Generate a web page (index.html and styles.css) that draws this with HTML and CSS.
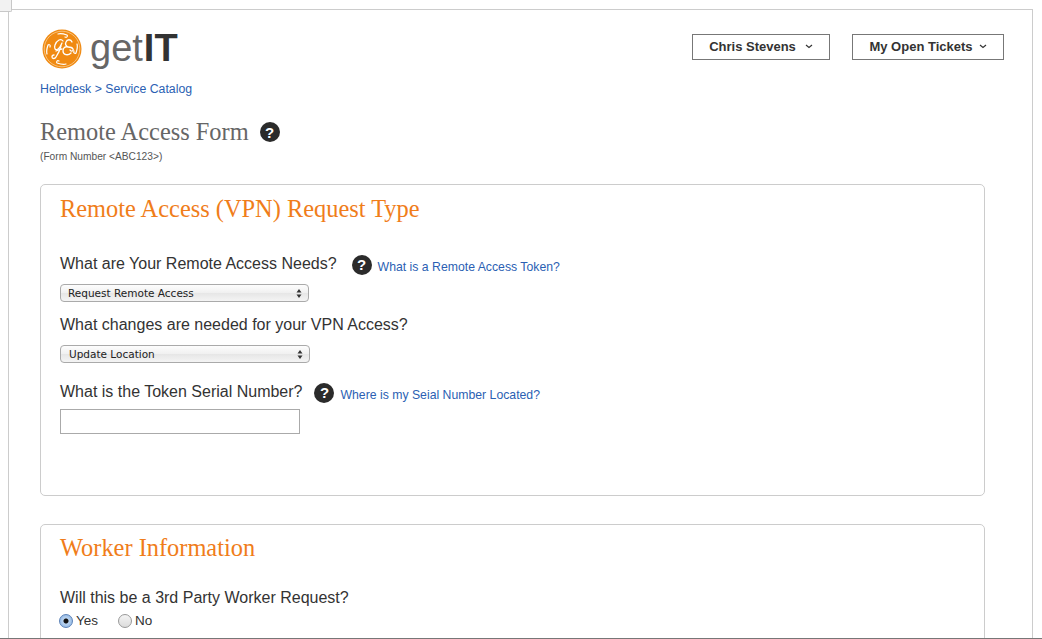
FILE: index.html
```html
<!DOCTYPE html>
<html lang="en">
<head>
    <meta charset="UTF-8">
    <meta name="viewport" content="width=device-width, initial-scale=1.0">
    <title>Remote Access Form</title>
    <link rel="stylesheet" href="styles.css">
</head>
<body>

    <div class="corner-tab"></div>

    <div class="page">
        <header class="top-bar">
            <div class="brand">
                <svg class="ge-logo" width="40" height="40" viewBox="0 0 40 40">
                    <circle cx="20" cy="20" r="19.500" fill="#f08a12"/>
                    <circle cx="20" cy="20" r="17.800" fill="none" stroke="#fbd9a8" stroke-width="0.700"/>
                    <g fill="none" stroke="#fff" stroke-width="1.300" stroke-linecap="round">
                        <path d="M21 12c-2-3-6-1-8 4-1 3 0 6 3 4 2-1 3-4 4-6"/>
                        <path d="M19 17c-1 4-3 8-5 11-1 2-4 2-4 0 0-1 1-2 2-2"/>
                        <path d="M14 22c2-1 4-2 6-2"/>
                        <path d="M30 13c-1-3-5-3-6 0-1 2 0 4 2 5-3-1-5 1-5 4 0 4 5 5 8 2"/>
                        <path d="M26 18c2 0 4 0 5 2 1 2-2 3-3 1"/>
                    </g>
                    <g fill="none" stroke="#fff" stroke-width="1.200" stroke-linecap="round">
                        <path d="M16 5c3-1 6 0 9 1 1 1 0 3-2 2"/>
                        <path d="M35 15c1 3 0 6-1 9-1 1-3 0-2-2"/>
                        <path d="M24 35c-3 1-6 0-9-1-1-1 0-3 2-2"/>
                        <path d="M5 25c-1-3 0-6 1-9 1-1 3 0 2 2"/>
                    </g>
                </svg>
                <span class="brand-name">get<strong>IT</strong></span>
            </div>
            <div class="top-actions">
                <button class="menu-btn menu-user">Chris Stevens
                    <svg width="8" height="5" viewBox="0 0 8 5"><path d="M1 1l3 2.500 3-2.500" fill="none" stroke="#333" stroke-width="1.200"/></svg>
                </button>
                <button class="menu-btn menu-tickets">My Open Tickets
                    <svg width="8" height="5" viewBox="0 0 8 5"><path d="M1 1l3 2.500 3-2.500" fill="none" stroke="#333" stroke-width="1.200"/></svg>
                </button>
            </div>
        </header>

        <p class="breadcrumb"><a href="#">Helpdesk</a> &gt; <a href="#">Service Catalog</a></p>

        <div class="form-title">
            <h1>Remote Access Form</h1>
            <span class="help-icon">?</span>
        </div>
        <p class="form-number">(Form Number &lt;ABC123&gt;)</p>

        <section class="card card-request">
            <h2>Remote Access (VPN) Request Type</h2>

            <div class="field-row row-needs">
                <label>What are Your Remote Access Needs?</label>
                <span class="help-icon">?</span>
                <a href="#">What is a Remote Access Token?</a>
            </div>
            <div class="select-box box-needs">
                <select><option>Request Remote Access</option></select>
                <svg class="select-arrows" width="6" height="9" viewBox="0 0 6 9"><path d="M3 0l2.500 3.500h-5zM3 9l2.500-3.500h-5z" fill="#333"/></svg>
            </div>

            <div class="field-row row-changes">
                <label>What changes are needed for your VPN Access?</label>
            </div>
            <div class="select-box box-changes">
                <select><option>Update Location</option></select>
                <svg class="select-arrows" width="6" height="9" viewBox="0 0 6 9"><path d="M3 0l2.500 3.500h-5zM3 9l2.500-3.500h-5z" fill="#333"/></svg>
            </div>

            <div class="field-row row-serial">
                <label>What is the Token Serial Number?</label>
                <span class="help-icon">?</span>
                <a href="#">Where is my Seial Number Located?</a>
            </div>
            <input class="serial-input" type="text">
        </section>

        <section class="card card-worker">
            <h2>Worker Information</h2>
            <div class="field-row row-third">
                <label>Will this be a 3rd Party Worker Request?</label>
            </div>
            <div class="radio-row">
                <span class="radio radio-on"></span><span class="radio-label">Yes</span>
                <span class="radio"></span><span class="radio-label">No</span>
            </div>
        </section>
    </div>

</body>
</html>
```

FILE: styles.css
```css
/* General Styles */
* {
    margin: 0;
    padding: 0;
    box-sizing: border-box;
}

html, body {
    height: 639px;
    overflow: hidden;
}

body {
    font-family: "Liberation Sans", Arial, sans-serif;
    background-color: white;
    color: #333;
    padding: 9px 9px 0 8px;
    border-bottom: 1px solid #777;
}

a {
    color: #2b5fb3;
    text-decoration: none;
}

.corner-tab {
    position: absolute;
    top: 0;
    left: 0;
    width: 12px;
    height: 12px;
    background-color: #f2f2f2;
    border-right: 1px solid #c8c8c8;
    border-bottom: 1px solid #c8c8c8;
    border-bottom-right-radius: 2px;
}

.page {
    height: 629px;
    overflow: hidden;
    border: 1px solid #ccc;
    border-bottom: none;
    padding: 18px 28px 0 31px;
}

/* Header */
.top-bar {
    display: flex;
    justify-content: space-between;
    align-items: flex-start;
}

.brand {
    display: flex;
    align-items: center;
    height: 41px;
}

.ge-logo {
    margin: 1px 8px 0 2px;
}

.brand-name {
    font-size: 38px;
    line-height: 41px;
    color: #666;
}

.brand-name strong {
    font-weight: bold;
    color: #333;
    margin-left: 1px;
}

.top-actions {
    display: flex;
    gap: 22px;
    margin-top: 6px;
}

.menu-btn {
    display: flex;
    align-items: center;
    justify-content: center;
    height: 26px;
    padding-bottom: 2px;
    background-color: white;
    border: 1px solid #777;
    font-family: "Liberation Sans", Arial, sans-serif;
    font-size: 13px;
    font-weight: bold;
    color: #333;
}

.menu-user {
    width: 138px;
    gap: 9px;
}

.menu-tickets {
    width: 152px;
    gap: 6px;
}

.breadcrumb {
    margin-top: 13px;
    font-size: 12.300px;
    line-height: 14px;
    color: #2b5fb3;
}

/* Form title */
.form-title {
    display: flex;
    align-items: center;
    gap: 11px;
    margin-top: 20px;
}

.form-title h1 {
    font-family: "Liberation Serif", "Times New Roman", serif;
    font-size: 24.400px;
    line-height: 32px;
    font-weight: normal;
    color: #666;
}

.help-icon {
    display: inline-flex;
    align-items: center;
    justify-content: center;
    flex: none;
    width: 20px;
    height: 20px;
    border-radius: 50%;
    background-color: #2b2b2b;
    color: white;
    font-size: 15px;
    font-weight: bold;
}

.form-number {
    margin-top: 3px;
    font-size: 10.200px;
    line-height: 12px;
    color: #555;
}

/* Cards */
.card {
    border: 1px solid #ccc;
    border-radius: 5px;
    padding: 0 19px;
    width: 945px;
}

.card h2 {
    font-family: "Liberation Serif", "Times New Roman", serif;
    font-size: 24.400px;
    line-height: 30px;
    font-weight: normal;
    color: #f07d1a;
}

.card-request {
    height: 312px;
    margin-top: 21px;
    padding-top: 9px;
}

.card-worker {
    height: 200px;
    margin-top: 28px;
    padding-top: 8px;
}

.field-row {
    display: flex;
    align-items: center;
    font-size: 16px;
    line-height: 20px;
}

.field-row a {
    font-size: 12.250px;
}

.row-needs {
    margin-top: 26px;
}

.row-needs .help-icon {
    margin: 3px 6px 0 15px;
}

.row-needs a {
    margin-top: 7px;
}

.row-changes {
    margin-top: 13px;
}

.row-serial {
    margin-top: 15px;
}

.row-serial .help-icon {
    margin: 3px 6px 0 12px;
}

.row-serial a {
    margin-top: 7px;
}

.row-third {
    margin-top: 25px;
}

/* Select boxes */
.select-box {
    position: relative;
    height: 18px;
}

.box-needs {
    width: 249px;
    margin-top: 7px;
}

.box-changes {
    width: 250px;
    margin-top: 10px;
}

.select-box select {
    appearance: none;
    display: block;
    width: 100%;
    height: 100%;
    padding-left: 7px;
    font-family: "DejaVu Sans", sans-serif;
    font-size: 10.500px;
    color: #222;
    background: linear-gradient(#fdfdfd, #f0f0f0 50%, #e6e6e6 51%, #f4f4f4);
    border: 1px solid #aaa;
    border-radius: 4px;
}

.box-changes select {
    padding-left: 8px;
}

.select-arrows {
    position: absolute;
    top: 5px;
    right: 7px;
}

.serial-input {
    display: block;
    width: 240px;
    height: 25px;
    margin-top: 4px;
    border: 1px solid #aaa;
    background-color: white;
}

/* Radios */
.radio-row {
    display: flex;
    align-items: center;
    margin-top: 5px;
    margin-left: -1px;
    font-size: 13.500px;
    line-height: 16px;
}

.radio {
    width: 14px;
    height: 14px;
    border-radius: 50%;
    border: 1px solid #999;
    background: linear-gradient(#f4f4f4, #dcdcdc);
}

.radio-on {
    border-color: #5b82b8;
    background: radial-gradient(circle, #111 0, #111 2px, #b9d3f0 3px, #8fb5e2 7px);
}

.radio-label {
    margin: 0 20px 0 3px;
}
```
